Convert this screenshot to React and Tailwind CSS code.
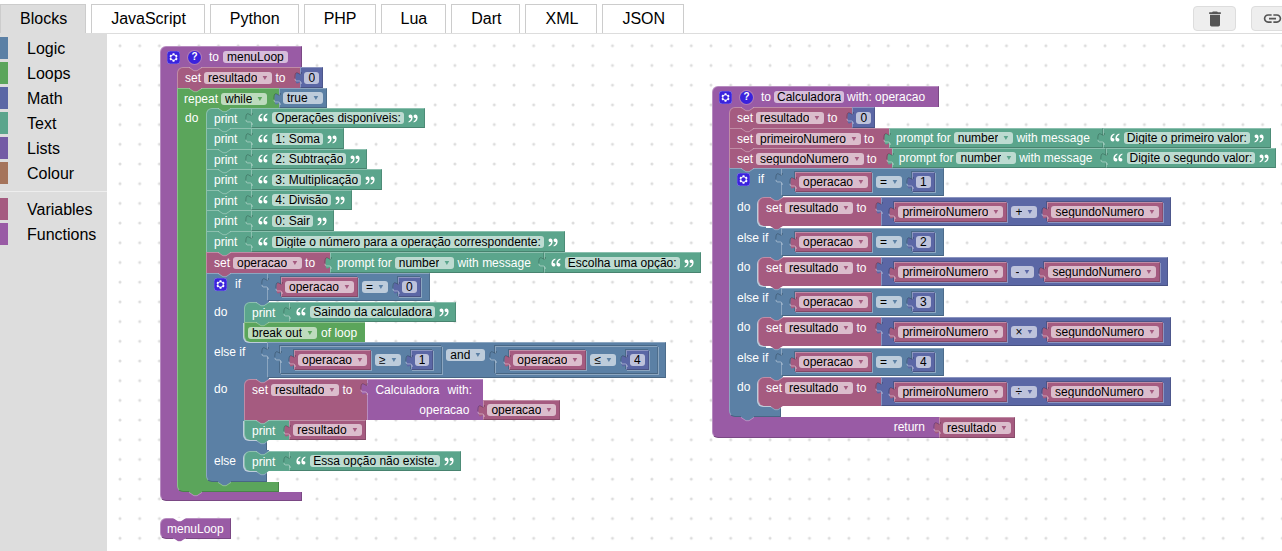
import React from "react";

const COLORS = {
  logic: { bg: "bg-[#5b80a5]", fill: "fill-[#5b80a5]" },
  loops: { bg: "bg-[#5ba55b]", fill: "fill-[#5ba55b]" },
  math: { bg: "bg-[#5b67a5]", fill: "fill-[#5b67a5]" },
  text: { bg: "bg-[#5ba58c]", fill: "fill-[#5ba58c]" },
  lists: { bg: "bg-[#745ba5]", fill: "fill-[#745ba5]" },
  colour: { bg: "bg-[#a5745b]", fill: "fill-[#a5745b]" },
  vars: { bg: "bg-[#a55b80]", fill: "fill-[#a55b80]" },
  func: { bg: "bg-[#995ba5]", fill: "fill-[#995ba5]" },
};

/* ---------- connectors ---------- */

function Notch({ c, className = "" }) {
  return (
    <svg
      className={`pointer-events-none absolute left-3 z-10 h-1 w-[13px] overflow-visible ${className}`}
      viewBox="0 0 13 4"
      aria-hidden="true"
    >
      <path d="M0 -1 V0 L5 3.3 H8 L13 0 V-1 Z" className={COLORS[c].fill} />
      <path d="M0 .4 L5 3.7 H8 L13 .4" fill="none" stroke="#fff" strokeOpacity=".35" strokeWidth=".9" />
    </svg>
  );
}

function Plug({ c }) {
  const d = "M7 3.5 V4 C7 12.2 .5 -2.4 .5 10.2 S7 8.1 7 16.4";
  return (
    <svg
      className="pointer-events-none absolute top-0 -left-[6px] z-10 h-[17px] w-[7px] overflow-visible"
      viewBox="0 0 7 17"
      aria-hidden="true"
    >
      <path d={d + " Z"} className={COLORS[c].fill} />
      <path d="M6.4 4 C6.4 11.2 -.2 -2 -.2 10.2" fill="none" stroke="#000" strokeOpacity=".22" strokeWidth="1" />
      <path d="M0 11 C0 15.5 6.3 10 6.3 16" fill="none" stroke="#fff" strokeOpacity=".4" strokeWidth="1" />
    </svg>
  );
}

/* ---------- fields ---------- */

function Drop({ c, v, name = "variable" }) {
  return (
    <span className="flex h-3 shrink-0 items-center gap-[5px] rounded-[3px] bg-white/60 px-1">
      <select
        aria-label={name}
        defaultValue={v}
        className="h-3 cursor-pointer appearance-none bg-transparent p-0 text-xs leading-3 text-black outline-none [field-sizing:content]"
      >
        <option value={v}>{v}</option>
      </select>
      <svg className="h-1 w-[6px]" viewBox="0 0 6 4" aria-hidden="true">
        <path d="M.6 0 H5.2 L2.9 4 Z" className={COLORS[c].fill} />
      </svg>
    </span>
  );
}

function Field({ v, name = "text", pad = "px-[3px]" }) {
  return (
    <input
      aria-label={name}
      defaultValue={v}
      className={`h-3 shrink-0 rounded-[3px] bg-white/60 py-0 text-xs leading-3 text-black outline-none [field-sizing:content] ${pad}`}
    />
  );
}

function Label({ children }) {
  return <span className="shrink-0 text-white">{children}</span>;
}

function Gear() {
  return (
    <button type="button" aria-label="Edit block shape" className="h-[13px] w-[13px] shrink-0">
      <svg className="h-[13px] w-[13px]" viewBox="0 0 16 16" aria-hidden="true">
        <rect width="16" height="16" rx="4" fill="#3a22dd" stroke="#8f86ea" strokeWidth=".8" />
        <path
          fill="#fff"
          d="m4.203,7.296 0,1.368 -0.92,0.677 -0.11,0.41 0.9,1.559 0.41,0.11 1.043,-0.457 1.187,0.683 0.127,1.134 0.3,0.3 1.8,0 0.3,-0.299 0.127,-1.138 1.185,-0.682 1.046,0.458 0.409,-0.11 0.9,-1.559 -0.11,-0.41 -0.92,-0.677 0,-1.366 0.92,-0.677 0.11,-0.41 -0.9,-1.559 -0.409,-0.109 -1.046,0.458 -1.185,-0.682 -0.127,-1.138 -0.3,-0.299 -1.8,0 -0.3,0.3 -0.126,1.135 -1.187,0.682 -1.043,-0.457 -0.41,0.11 -0.899,1.559 0.108,0.409z"
        />
        <circle cx="8" cy="8" r="2.7" fill="#3a22dd" />
      </svg>
    </button>
  );
}

function Help() {
  return (
    <button
      type="button"
      aria-label="Describe this function"
      className="flex h-[13px] w-[13px] shrink-0 items-center justify-center rounded-full bg-[#3a22dd] text-[10px] leading-none font-bold text-white ring-1 ring-white/20"
    >
      ?
    </button>
  );
}

function Quote({ close }) {
  return (
    <svg className={`h-[10px] w-[10px] shrink-0 ${close ? "rotate-180" : ""}`} viewBox="0 0 10 10" aria-hidden="true">
      <g fill="#fff">
        <path d="M4.3 .6 C1.8 1.2 .4 3 .4 5.6 C.4 7.6 1.3 8.6 2.6 8.6 C3.7 8.6 4.4 7.8 4.4 6.8 C4.4 5.7 3.6 5 2.6 5 C2.3 5 2.1 5 2 5.1 C2.1 3.6 2.9 2.4 4.5 1.5 Z" />
        <path d="M9.3 .6 C6.8 1.2 5.4 3 5.4 5.6 C5.4 7.6 6.3 8.6 7.6 8.6 C8.7 8.6 9.4 7.8 9.4 6.8 C9.4 5.7 8.6 5 7.6 5 C7.3 5 7.1 5 7 5.1 C7.1 3.6 7.9 2.4 9.5 1.5 Z" />
      </g>
    </svg>
  );
}

/* ---------- value blocks ---------- */

function Value({ c, inline, size = "h-full", pad = "px-1", align = "items-center", children }) {
  const edge = inline
    ? "shadow-[-1px_-1px_0_rgba(0,0,0,0.18),1px_1px_0_rgba(255,255,255,0.3)]"
    : "";
  return (
    <div
      className={`relative flex shrink-0 border-t border-l border-white/30 border-r border-r-black/15 border-b border-b-black/20 ${align} ${size} ${pad} ${edge} ${COLORS[c].bg}`}
    >
      <Plug c={c} />
      {children}
    </div>
  );
}

function Num({ v, inline, size }) {
  return (
    <Value c="math" inline={inline} size={size || (inline ? "h-5" : "h-full")} pad="px-[3px]">
      <Field v={v} name="number" pad="px-1" />
    </Value>
  );
}

function Var({ v, inline, size }) {
  return (
    <Value c="vars" inline={inline} size={size || (inline ? "h-5" : "h-full")} pad="px-[3px]">
      <Drop c="vars" v={v} />
    </Value>
  );
}

function Str({ v }) {
  return (
    <Value c="text" pad="px-[6px] gap-1">
      <Quote />
      <Field v={v} />
      <Quote close />
    </Value>
  );
}

function Prompt({ v }) {
  return (
    <>
      <Value c="text" pad="pl-[6px] pr-3 gap-[3px]">
        <Label>prompt for</Label>
        <Drop c="text" v="number" name="type" />
        <Label>with message</Label>
      </Value>
      <Str v={v} />
    </>
  );
}

function Compare({ a, op, b, inline }) {
  return (
    <Value c="logic" inline={inline} size="h-7" pad="pl-[13px] pr-2 gap-1">
      <Var v={a} inline />
      <Drop c="logic" v={op} name="comparison" />
      <span className="w-[2px]" />
      <Num v={b} inline />
    </Value>
  );
}

function Arithmetic({ op }) {
  return (
    <Value c="math" size="h-[29px]" pad="pl-3 pr-[7px] gap-1">
      <Var v="primeiroNumero" inline />
      <Drop c="math" v={op} name="operator" />
      <span className="w-[2px]" />
      <Var v="segundoNumero" inline />
    </Value>
  );
}

/* ---------- statement blocks ---------- */

function Statement({ c, size = "h-5", pr = "pr-[14px]", first, last, tab = true, label, children }) {
  return (
    <div className={`relative flex w-max items-start ${size}`}>
      <div
        className={`h-full border-t border-l border-white/30 ${COLORS[c].bg} ${first ? "rounded-tl-md" : ""} ${
          last ? "rounded-bl-md shadow-[-1px_1px_0_rgba(255,255,255,0.6)]" : ""
        }`}
      >
        <div className={`flex h-[19px] items-center gap-[3px] pl-[7px] ${pr}`}>{label}</div>
      </div>
      {children}
      {tab && <Notch c={c} className="top-full" />}
    </div>
  );
}

function SetVar({ name, size, first, last, children }) {
  return (
    <Statement
      c="vars"
      size={size}
      first={first}
      last={last}
      pr="pr-[15px]"
      label={
        <>
          <Label>set</Label>
          <Drop c="vars" v={name} />
          <Label>to</Label>
        </>
      }
    >
      {children}
    </Statement>
  );
}

function Print({ size, first, last, children }) {
  return (
    <Statement c="text" size={size} first={first} last={last} label={<Label>print</Label>}>
      {children}
    </Statement>
  );
}

/* A labelled mouth: coloured column on the left, nested stack on the right. */
function Mouth({ c, column, label, pb = "", children }) {
  return (
    <div className="flex">
      <div className={`-mr-2 shrink-0 border-l border-white/30 pl-[7px] ${column} ${COLORS[c].bg}`}>
        <div className="flex h-5 items-center">
          <Label>{label}</Label>
        </div>
      </div>
      <div className={`relative ${pb}`}>
        <Notch c={c} className="top-0" />
        {children}
      </div>
    </div>
  );
}

function Condition({ body, size, top, label, children }) {
  return (
    <div className={`flex items-start ${size}`}>
      <div
        className={`h-full shrink-0 border-l border-white/30 pl-[7px] ${top ? "border-t" : ""} ${body} ${COLORS.logic.bg}`}
      >
        <div className="flex h-5 items-center gap-2">{label}</div>
      </div>
      {children}
    </div>
  );
}

function Arm({ c, size, round }) {
  return (
    <div
      className={`border-l border-white/30 border-r border-r-black/20 ${size} ${COLORS[c].bg} ${
        round ? "rounded-bl-md border-b border-b-black/20" : ""
      }`}
    />
  );
}

/* ---------- programs ---------- */

const MENU = [
  "Operações disponíveis:",
  "1: Soma",
  "2: Subtração",
  "3: Multiplicação",
  "4: Divisão",
  "0: Sair",
  "Digite o número para a operação correspondente:",
];

function MenuLoop() {
  return (
    <div className="absolute top-3 left-[53px]">
      <div className="flex h-[21px] w-[142px] items-center gap-2 rounded-tl-md border-t border-l border-white/30 border-r border-r-black/20 bg-[#995ba5] pl-[6px]">
        <Gear />
        <Help />
        <span className="flex items-center gap-1">
          <Label>to</Label>
          <Field v="menuLoop" name="function name" pad="px-1" />
        </span>
      </div>
      <Mouth c="func" column="w-[25px]">
        <SetVar name="resultado" size="h-[21px]" first>
          <Num v="0" />
        </SetVar>
        <div className="relative">
          <div className="flex h-5">
            <div className="flex w-[102px] items-center gap-[3px] border-t border-l border-white/30 bg-[#5ba55b] pl-[6px]">
              <Label>repeat</Label>
              <Drop c="loops" v="while" name="repeat mode" />
            </div>
            <Value c="logic" pad="px-[3px]">
              <Drop c="logic" v="true" name="boolean" />
            </Value>
          </div>
          <Mouth c="loops" column="w-[37px]" label="do">
            {MENU.map((line, i) => (
              <Print key={line} size={i % 2 || i === 6 ? "h-[21px]" : "h-5"} first={i === 0}>
                <Str v={line} />
              </Print>
            ))}
            <SetVar name="operacao" size="h-[21px]">
              <Prompt v="Escolha uma opção:" />
            </SetVar>
            <div className="relative">
              <Condition
                body="w-[61px]"
                size="h-[29px]"
                top
                label={
                  <>
                    <Gear />
                    <Label>if</Label>
                  </>
                }
              >
                <Compare a="operacao" op="=" b="0" />
              </Condition>
              <Mouth c="logic" column="w-[46px]" label="do">
                <Print first>
                  <Str v="Saindo da calculadora" />
                </Print>
                <Statement
                  c="loops"
                  last
                  tab={false}
                  pr="pr-2"
                  label={
                    <span className="-ml-1 flex items-center gap-1">
                      <Drop c="loops" v="break out" name="flow" />
                      <Label>of loop</Label>
                    </span>
                  }
                />
              </Mouth>
              <Condition body="w-[61px]" size="h-[37px]" label={<Label>else if</Label>}>
                <Value c="logic" size="h-9" pad="pl-3 pr-[7px] pt-[3px] gap-1" align="items-start">
                  <Compare a="operacao" op="≥" b="1" inline />
                  <span className="pt-[3px]">
                    <Drop c="logic" v="and" name="junction" />
                  </span>
                  <span className="w-[2px]" />
                  <Compare a="operacao" op="≤" b="4" inline />
                </Value>
              </Condition>
              <Mouth c="logic" column="w-[46px]" label="do">
                <SetVar name="resultado" size="h-[41px]" first>
                  <div className="relative flex h-full items-end">
                    <div className="h-full w-[116px] border-t border-l border-white/30 bg-[#995ba5]">
                      <Plug c="func" />
                      <div className="flex h-5 items-center gap-2 pl-[7px]">
                        <Label>Calculadora</Label>
                        <Label>with:</Label>
                      </div>
                      <div className="flex h-5 items-center justify-end pr-[14px]">
                        <Label>operacao</Label>
                      </div>
                    </div>
                    <Var v="operacao" size="h-5" />
                  </div>
                </SetVar>
                <Print last>
                  <Var v="resultado" />
                </Print>
              </Mouth>
              <Arm c="logic" size="h-[11px] w-[61px]" />
              <Mouth c="logic" column="w-[46px]" label="else">
                <Print first last>
                  <Str v="Essa opção não existe." />
                </Print>
              </Mouth>
              <Arm c="logic" size="h-[11px] w-[61px]" round />
              <Notch c="logic" className="top-full" />
            </div>
          </Mouth>
          <Arm c="loops" size="h-[10px] w-[102px]" round />
          <Notch c="loops" className="top-full" />
        </div>
      </Mouth>
      <Arm c="func" size="h-[9px] w-[142px]" round />
    </div>
  );
}

const CASES = [
  { n: "1", op: "+" },
  { n: "2", op: "-" },
  { n: "3", op: "×" },
  { n: "4", op: "÷" },
];

function Calculadora() {
  return (
    <div className="absolute top-[52px] left-[605px]">
      <div className="flex h-[21px] w-[227px] items-center gap-2 rounded-tl-md border-t border-l border-white/30 border-r border-r-black/20 bg-[#995ba5] pl-[6px]">
        <Gear />
        <Help />
        <span className="flex items-center gap-[3px]">
          <Label>to</Label>
          <Field v="Calculadora" name="function name" />
          <Label>with: operacao</Label>
        </span>
      </div>
      <Mouth c="func" column="w-[25px]">
        <SetVar name="resultado" size="h-[21px]" first>
          <Num v="0" />
        </SetVar>
        <SetVar name="primeiroNumero">
          <Prompt v="Digite o primeiro valor:" />
        </SetVar>
        <SetVar name="segundoNumero">
          <Prompt v="Digite o segundo valor:" />
        </SetVar>
        <div className="relative">
          {CASES.map(({ n, op }, i) => (
            <React.Fragment key={n}>
              <Condition
                body="w-[52px]"
                size="h-[29px]"
                top={i === 0}
                label={
                  i === 0 ? (
                    <>
                      <Gear />
                      <Label>if</Label>
                    </>
                  ) : (
                    <Label>else if</Label>
                  )
                }
              >
                <Compare a="operacao" op="=" b={n} />
              </Condition>
              <Mouth c="logic" column="w-[37px]" label="do" pb={i < 3 ? "pb-[2px]" : ""}>
                <SetVar name="resultado" size="h-[29px]" first last>
                  <Arithmetic op={op} />
                </SetVar>
              </Mouth>
            </React.Fragment>
          ))}
          <Arm c="logic" size="h-[11px] w-[52px]" round />
          <Notch c="logic" className="top-full" />
        </div>
      </Mouth>
      <div className="flex h-[21px]">
        <div className="flex w-[227px] items-center justify-end rounded-bl-md border-b border-l border-white/30 border-b-black/20 bg-[#995ba5] pr-[14px]">
          <Label>return</Label>
        </div>
        <Var v="resultado" />
      </div>
    </div>
  );
}

function Call() {
  return (
    <div className="absolute top-[484px] left-[53px]">
      <div className="relative flex h-[21px] items-center rounded-l-md border-t border-l border-white/30 border-r border-r-black/20 border-b border-b-black/20 bg-[#995ba5] px-[6px]">
        <Label>menuLoop</Label>
        <svg className="absolute -top-px left-3 h-1 w-[13px]" viewBox="0 0 13 4" aria-hidden="true">
          <path d="M0 0 L5 3.3 H8 L13 0 Z" fill="#fff" />
        </svg>
        <Notch c="func" className="top-full" />
      </div>
    </div>
  );
}

/* ---------- page ---------- */

const TABS = ["Blocks", "JavaScript", "Python", "PHP", "Lua", "Dart", "XML", "JSON"];

const CATEGORIES = [
  ["Logic", "logic"],
  ["Loops", "loops"],
  ["Math", "math"],
  ["Text", "text"],
  ["Lists", "lists"],
  ["Colour", "colour"],
  null,
  ["Variables", "vars"],
  ["Functions", "func"],
];

export default function App() {
  return (
    <div className="flex h-screen flex-col overflow-hidden bg-white font-['Liberation_Sans',Arial,sans-serif] text-base text-black">
      <header className="flex h-[33px] shrink-0 justify-between">
        <nav className="flex gap-[5px] pt-1" aria-label="Code view">
          {TABS.map((t, i) => (
            <button
              key={t}
              type="button"
              className={`border border-b-0 border-[#ccc] pr-[18px] pl-[19px] ${i === 0 ? "bg-[#ddd]" : "bg-white"}`}
            >
              {t}
            </button>
          ))}
        </nav>
        <div className="-mr-3 flex gap-[15px] pt-[6px]">
          <button
            type="button"
            aria-label="Discard all blocks"
            className="flex h-[25px] w-[43px] items-center justify-center rounded border border-[#ddd] bg-[#eee]"
          >
            <svg className="h-5 w-5" viewBox="0 0 24 24" fill="#555" aria-hidden="true">
              <path d="M6 19c0 1.1.9 2 2 2h8c1.1 0 2-.9 2-2V7H6v12zM19 4h-3.5l-1-1h-5l-1 1H5v2h14V4z" />
            </svg>
          </button>
          <button
            type="button"
            aria-label="Save and link to blocks"
            className="flex h-[25px] w-[43px] items-center justify-center rounded border border-[#ddd] bg-[#eee]"
          >
            <svg className="h-[21px] w-[21px]" viewBox="0 0 24 24" fill="#555" aria-hidden="true">
              <path d="M3.9 12c0-1.71 1.39-3.1 3.1-3.1h4V7H7c-2.76 0-5 2.24-5 5s2.24 5 5 5h4v-1.9H7c-1.71 0-3.1-1.39-3.1-3.1zM8 13h8v-2H8v2zm9-6h-4v1.9h4c1.71 0 3.1 1.39 3.1 3.1s-1.39 3.1-3.1 3.1h-4V17h4c2.76 0 5-2.24 5-5s-2.24-5-5-5z" />
            </svg>
          </button>
        </div>
      </header>

      <div className="flex min-h-0 flex-1">
        <aside className="w-[107px] shrink-0 bg-[#ddd] pt-1">
          <ul className="flex flex-col gap-[3px]">
            {CATEGORIES.map((cat) =>
              cat ? (
                <li key={cat[0]} className="flex h-[22px] items-center gap-[19px] leading-[22px]">
                  <span className={`h-full w-2 ${COLORS[cat[1]].bg}`} />
                  <span className="pt-px">{cat[0]}</span>
                </li>
              ) : (
                <li key="sep" role="separator" className="mt-1 mb-[3px] h-px bg-[#eee]" />
              )
            )}
          </ul>
        </aside>

        <main className="relative flex-1 overflow-hidden border-t border-[#ddd] text-xs leading-3 whitespace-nowrap">
          <svg className="absolute inset-0 h-full w-full" aria-hidden="true">
            <defs>
              <pattern id="dots" x="3.1" y="1.9" width="19.7" height="19.7" patternUnits="userSpaceOnUse">
                <circle cx="9.9" cy="9.9" r="1.5" fill="#dcdcdc" />
              </pattern>
            </defs>
            <rect width="100%" height="100%" fill="url(#dots)" />
          </svg>
          <MenuLoop />
          <Calculadora />
          <Call />
        </main>
      </div>
    </div>
  );
}
